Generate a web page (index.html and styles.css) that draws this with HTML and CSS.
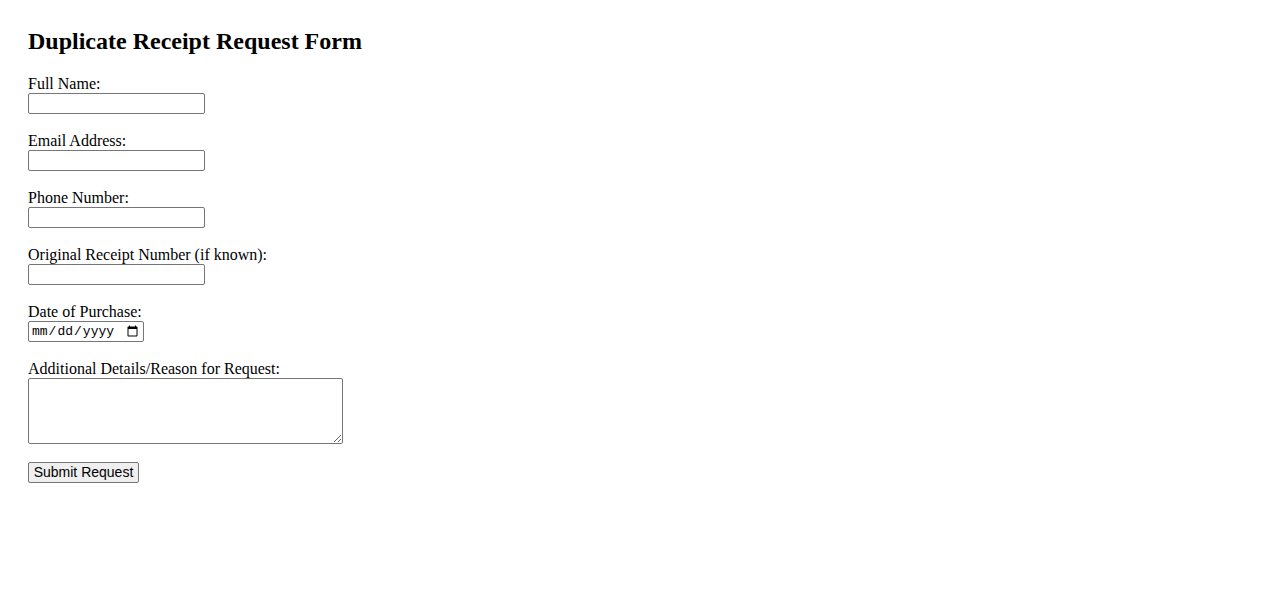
FILE: index.html
```html
<!DOCTYPE html>
<html lang="en">
<head>
<meta charset="utf-8">
<title>Duplicate Receipt Request Form</title>
<link rel="stylesheet" href="styles.css">
</head>
<body>
<main class="page">
  <h2 class="title">Duplicate Receipt Request Form</h2>
  <form class="form">
    <div class="field">
      <label class="label" for="name">Full Name:</label>
      <input class="text-input" type="text" id="name">
    </div>
    <div class="field">
      <label class="label" for="email">Email Address:</label>
      <input class="text-input" type="email" id="email">
    </div>
    <div class="field">
      <label class="label" for="phone">Phone Number:</label>
      <input class="text-input" type="tel" id="phone">
    </div>
    <div class="field">
      <label class="label" for="receipt">Original Receipt Number (if known):</label>
      <input class="text-input" type="text" id="receipt">
    </div>
    <div class="field">
      <label class="label" for="date">Date of Purchase:</label>
      <input class="date-input" type="date" id="date">
    </div>
    <div class="field">
      <label class="label" for="details">Additional Details/Reason for Request:</label>
      <textarea class="textarea" id="details"></textarea>
    </div>
    <button class="submit" type="submit">Submit Request</button>
  </form>
</main>
</body>
</html>
```

FILE: styles.css
```css
html, body {
  margin: 0;
  padding: 0;
  background: #ffffff;
}

body {
  font-family: "Liberation Serif", "Times New Roman", serif;
  font-size: 16px;
  color: #000000;
}

.page {
  padding: 28px;
}

.title {
  margin: 0 0 19px 0;
  font-size: 24px;
  font-weight: bold;
  line-height: 27.5px;
}

.form {
  display: flex;
  flex-direction: column;
  align-items: flex-start;
}

.field {
  display: flex;
  flex-direction: column;
  align-items: flex-start;
  margin-bottom: 18px;
}

.label {
  display: block;
  line-height: 18px;
  height: 18px;
}

.text-input,
.date-input,
.textarea {
  box-sizing: border-box;
  margin: 0;
  border: 1px solid #767676;
  border-radius: 2px;
  background: #ffffff;
  font-size: 13.33px;
}

.text-input {
  width: 177px;
  height: 21px;
  padding: 1px 2px;
  font-family: "Liberation Sans", Arial, sans-serif;
}

.date-input {
  width: 116px;
  height: 21px;
  padding: 1px 2px;
  font-family: "Liberation Mono", "DejaVu Sans Mono", monospace;
  font-size: 13px;
  color: #000000;
}

.textarea {
  display: block;
  width: 315px;
  height: 66px;
  padding: 2px;
  font-family: "Liberation Mono", monospace;
  resize: both;
}

.submit {
  box-sizing: border-box;
  width: 111px;
  height: 21px;
  margin: 0;
  padding: 1px 2px;
  border: 1px solid #767676;
  border-radius: 2px;
  background: #efefef;
  font-family: "Liberation Sans", Arial, sans-serif;
  font-size: 14px;
  color: #000000;
  line-height: 16px;
  white-space: nowrap;
  text-align: center;
}
```
